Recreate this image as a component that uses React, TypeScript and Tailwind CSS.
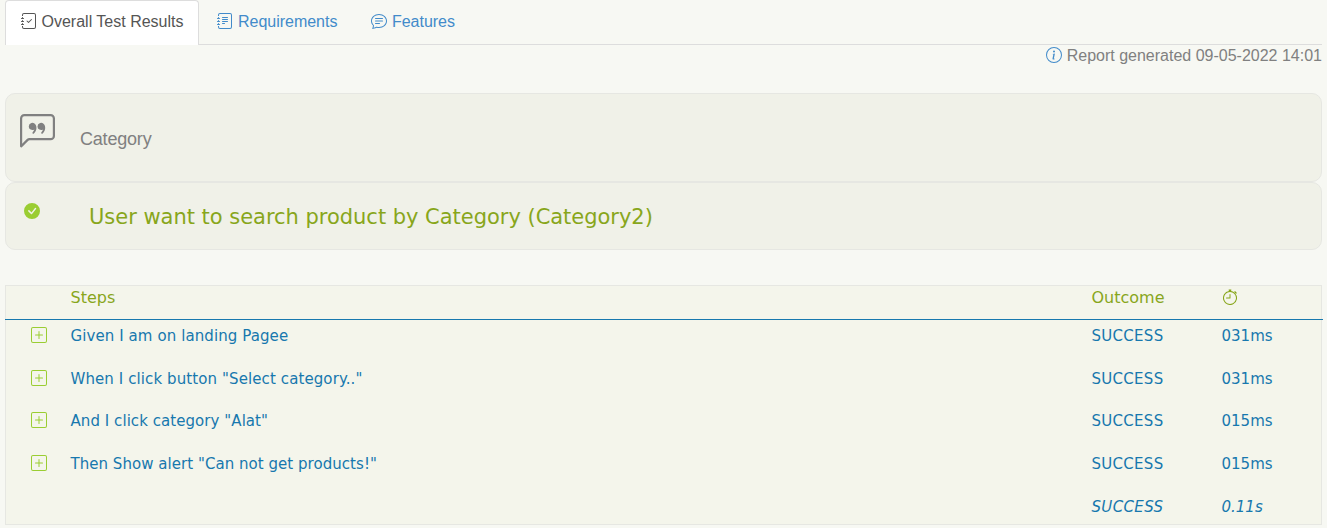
import {
  BsChatLeftQuote,
  BsChatText,
  BsCheckCircleFill,
  BsInfoCircle,
  BsJournalCheck,
  BsJournalText,
  BsPlusSquare,
  BsStopwatch,
} from "react-icons/bs";

const steps = [
  { text: "Given I am on landing Pagee", outcome: "SUCCESS", time: "031ms", spacing: "tracking-[0.09px]" },
  { text: 'When I click button "Select category.."', outcome: "SUCCESS", time: "031ms", spacing: "tracking-[0.1px]" },
  { text: 'And I click category "Alat"', outcome: "SUCCESS", time: "015ms", spacing: "tracking-[0.06px]" },
  { text: 'Then Show alert "Can not get products!"', outcome: "SUCCESS", time: "015ms", spacing: "tracking-[0.04px]" },
];

export default function App() {
  return (
    <div className="h-[528px] overflow-hidden bg-[#f7f8f3] px-[5px] font-['Liberation_Sans',Arial,sans-serif] text-base text-[#808080]">
      <nav className="flex h-[45px] border-b border-[#dddddd]">
        <a className="flex h-[45px] w-[194px] items-start rounded-t border border-b-0 border-[#dddddd] bg-white pl-[15px] pt-[9px] leading-6 text-[#555555]">
          <BsJournalCheck className="mt-[3px] mr-[4.5px] size-4 shrink-0" />
          <span className="whitespace-nowrap">Overall Test Results</span>
        </a>
        <a className="ml-[18px] flex items-start pt-[10px] leading-6 text-[#428bca]">
          <BsJournalText className="mt-[3px] mr-[5px] size-4" />
          <span className="tracking-[-0.02px]">Requirements</span>
        </a>
        <a className="ml-[34px] flex items-start pt-[10px] leading-6 text-[#428bca]">
          <BsChatText className="mt-[3px] mr-[4.5px] size-4" />
          <span>Features</span>
        </a>
      </nav>
      <div className="flex h-12 items-start justify-end leading-[22px]">
        <BsInfoCircle className="mt-[2px] mr-[5px] size-4 text-[#428bca]" />
        <span>Report generated 09-05-2022 14:01</span>
      </div>
      <header className="flex h-[89px] rounded-[10px] border border-[#e6e7e2] bg-[#f0f1e8]">
        <BsChatLeftQuote className="ml-[14px] mt-[20px] size-[35px]" />
        <h3 className="ml-[25px] mt-[33px] text-lg leading-6 tracking-[-0.2px]">Category</h3>
      </header>
      <section className="flex h-[68px] rounded-[10px] border border-[#e6e7e2] bg-[#f0f1e8]">
        <BsCheckCircleFill className="ml-[18px] mt-[20px] size-4 text-[#9acd32]" />
        <h2 className="ml-[49px] mt-[19px] whitespace-nowrap font-[Verdana,'DejaVu_Sans',sans-serif] text-[21px] leading-[30px] tracking-[-0.025px] text-[#88a61b]">
          User want to search product by Category (Category2)
        </h2>
      </section>
      <section className="mt-[35px] h-[240px] border border-[#e6e7e2] bg-[#f4f5eb] font-[Verdana,'DejaVu_Sans',sans-serif] text-[15px] text-[#1778ae]">
        <div className="-mx-px grid h-[34px] w-[1318px] grid-cols-[65.5px_1021px_130px_101.5px] border-b border-[#1778ae] text-base leading-[23px] text-[#88a61b]">
          <span />
          <span>Steps</span>
          <span>Outcome</span>
          <BsStopwatch className="mt-[3px] size-4" />
        </div>
        {steps.map((step) => (
          <div
            key={step.text}
            className="-mx-px grid h-[42.7px] grid-cols-[65.5px_1021px_130px_100.5px] leading-8"
          >
            <BsPlusSquare className="ml-[26px] mt-[7px] size-4 text-[#9acd32]" />
            <span className={step.spacing}>{step.text}</span>
            <span className="tracking-[0.28px]">{step.outcome}</span>
            <span>{step.time}</span>
          </div>
        ))}
        <div className="-mx-px grid grid-cols-[1086.5px_130px_100.5px] italic leading-8">
          <span />
          <span className="tracking-[0.35px]">SUCCESS</span>
          <span>0.11s</span>
        </div>
      </section>
    </div>
  );
}
